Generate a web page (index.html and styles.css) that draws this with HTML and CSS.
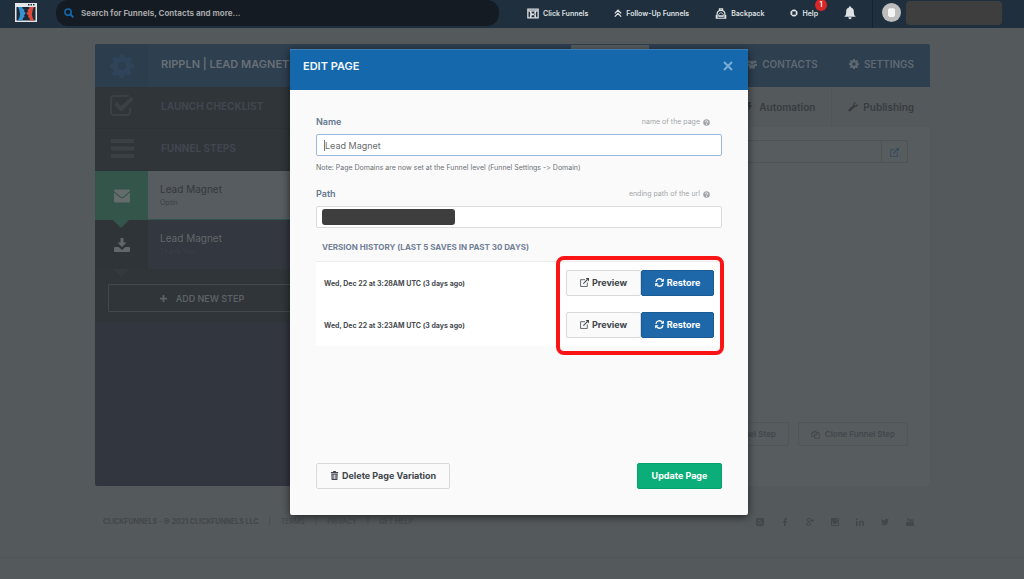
FILE: index.html
```
<!DOCTYPE html>
<html lang="en">
<head>
  <meta charset="UTF-8">
  <meta name="viewport" content="width=device-width, initial-scale=1.0">
  <title>Edit Page</title>
  <link rel="stylesheet" href="styles.css">
</head>
<body>
  <!-- shared icons -->
  <svg class="sprite" aria-hidden="true">
    <symbol id="gear" viewBox="0 0 16 16"><path fill-rule="evenodd" d="M6.600 0h2.800l.4 2.100 1.400.6L13 1.500l1.700 1.900-1.100 1.800.5 1.300 1.900.4v2.400l-2 .5-.5 1.400 1.100 1.800-1.800 1.800-1.800-1.100-1.400.6-.4 2H6.600l-.4-2-1.400-.6L3 14.800 1.300 13l1.100-1.800-.5-1.400-1.900-.5V6.900l1.900-.4.5-1.300-1.100-1.800L3 1.500l1.800 1.200 1.400-.6zM8 5.300a2.700 2.700 0 1 0 0 5.400 2.700 2.700 0 0 0 0-5.400z"/></symbol>
    <symbol id="external" viewBox="0 0 16 16"><path fill="none" stroke="currentColor" stroke-width="1.400" d="M9 3H1v12h12V8"/><path fill="none" stroke="currentColor" stroke-width="1.800" d="M6 10l7-7"/><path d="M10 0h6v6z"/></symbol>
    <symbol id="refresh" viewBox="0 0 16 16"><path fill="none" stroke="currentColor" stroke-width="2.400" d="M1.700 7A6.300 6.300 0 0 1 13 4M14.300 9A6.300 6.300 0 0 1 3 12"/><path d="M15.800.8v6H9.800zM.2 15.200v-6h6z"/></symbol>
    <symbol id="question" viewBox="0 0 16 16"><circle cx="8" cy="8" r="7.500"/><path fill="none" stroke="#fafafa" stroke-width="2" d="M5.300 6.300C5.400 3 10.700 3.200 10.600 6c0 1.700-2.500 1.800-2.500 3.800M8.100 11v2"/></symbol>
  </svg>

  <header class="topbar">
    <a class="logo" href="#" aria-label="Home">
      <svg viewBox="0 0 22 19"><path fill="#e4e6e8" d="M0 0h22v19H0z"/><path fill="#1b2a38" d="M1.500 4h19v13.500h-19zM13 1h1.500v1.500H13zM15.500 1H17v1.500h-1.500zM18 1h1.500v1.500H18z"/><path fill="#3a91cf" d="M3 4h4l1 2 1.500.5L9 8.500l1.500 1-.5 2-1 .5.500 2L8 15l-.5 2.500H3Q7 11 3 4z"/><path fill="#e0493a" d="M19 4h-4.500l-.5 2-1.500.5.500 2-1.500 1.500.5 1.500 1.500.5-.5 2 1.500 1 .5 2.500H19Q15 11 19 4z"/></svg>
    </a>
    <div class="search">
      <svg viewBox="0 0 16 16"><circle cx="6.500" cy="6.500" r="5" fill="none" stroke="currentColor" stroke-width="2.500"/><path stroke="currentColor" stroke-width="3" d="M10 10l5 5"/></svg>
      <input type="text" aria-label="Search" placeholder="Search for Funnels, Contacts and more...">
    </div>
    <nav class="topnav">
      <a class="nav-click" href="#"><svg viewBox="0 0 14 12"><path fill="none" stroke="currentColor" stroke-width="1.500" d="M1 1h12v10H1zM1 3h12"/><path d="M3 3h2q2 4 0 8H3q2-4 0-8zM11 3H9q-2 4 0 8h2q-2-4 0-8zM5 6h4v2H5z"/></svg>Click Funnels</a>
      <a class="nav-follow" href="#"><svg viewBox="0 0 10 10"><path fill="none" stroke="currentColor" stroke-width="1.600" d="M1 5.500l4-4 4 4M1 9.500l4-4 4 4"/></svg>Follow-Up Funnels</a>
      <a class="nav-pack" href="#"><svg viewBox="0 0 14 14"><path fill="none" stroke="currentColor" stroke-width="1.500" d="M5 3V1h4v2M2 13V8q0-5 5-5t5 5v5zM1 9v4h12V9M4 10h6"/><path fill="none" stroke="currentColor" d="M4 8q3-4 6 0v3H4z"/></svg>Backpack</a>
      <a class="nav-help" href="#"><svg viewBox="0 0 10 10"><circle cx="5" cy="5" r="3.400" fill="none" stroke="currentColor" stroke-width="2.200"/><path stroke="#1f2f3d" stroke-width=".7" d="M1 1l2.500 2.500M9 1L6.500 3.500M1 9l2.500-2.500M9 9L6.500 6.500"/></svg>Help<span class="badge">1</span></a>
      <a class="nav-bell" href="#" aria-label="Notifications"><svg viewBox="0 0 14 16"><path d="M7 0q1.200 0 1.200 1.600C11 2.200 11.500 4.500 11.500 7c0 3 1 4.200 2.300 5.300H.2C1.500 11.200 2.500 10 2.500 7c0-2.500.5-4.800 3.300-5.400Q5.800 0 7 0zM5 13h4q-.3 2.200-2 2.200T5 13z"/></svg></a>
    </nav>
    <div class="account">
      <span class="avatar"><svg viewBox="0 0 8 10"><path d="M1 0h6v1h1v8H7v1H1V9H0V1h1z"/></svg></span>
      <span class="account-name"></span>
    </div>
  </header>

  <main class="panel">
    <div class="panel-head">
      <span class="cell"><svg class="big-gear"><use href="#gear"/></svg></span>
      <h1>RIPPLN | LEAD MAGNET</h1>
      <span class="active-tab"></span>
      <nav class="head-nav">
        <a href="#"><svg viewBox="0 0 16 14"><circle cx="3" cy="3.500" r="2.200"/><circle cx="13" cy="3.500" r="2.200"/><circle cx="8" cy="4.500" r="3"/><path d="M0 10V6.500h4.500L6 8q-3 0-3 2.500zM16 10V6.500h-4.500L10 8q3 0 3 2.500zM3.500 14v-3q0-3 3-3h3q3 0 3 3v3z"/></svg>CONTACTS</a>
        <a href="#"><svg><use href="#gear"/></svg>SETTINGS</a>
      </nav>
    </div>
    <div class="panel-body">
      <aside class="sidebar">
        <div class="side-title">
          <span class="cell"><svg viewBox="0 0 24 22"><path fill="none" stroke="currentColor" stroke-width="2" d="M19 1H4Q1 1 1 4v13q0 3 3 3h13q3 0 3-3v-4"/><path fill="none" stroke="currentColor" stroke-width="4" d="M5.500 8.500L11 14 22.500 3"/></svg></span>
          <span>LAUNCH CHECKLIST</span>
        </div>
        <div class="side-title">
          <span class="cell"><svg viewBox="0 0 24 22"><path d="M1 2h23v4H1zM1 9.500h23v4H1zM1 17h23v4H1z"/></svg></span>
          <span>FUNNEL STEPS</span>
        </div>
        <a class="step step-active" href="#">
          <span class="cell"><svg viewBox="0 0 16 13"><path d="M1 0h14q1 0 1 1.500L9.500 7Q8 8 6.500 7L0 1.500Q0 0 1 0zM0 3l6 5q2 1.500 4 0l6-5v9q0 1-1 1H1q-1 0-1-1z"/></svg></span>
          <span class="step-text"><b>Lead Magnet</b><small>Optin</small></span>
        </a>
        <a class="step" href="#">
          <span class="cell"><svg viewBox="0 0 16 14"><path d="M6.500 0h3v4.500h3L8 9 3.500 4.500h3zM1 9h3.500L8 12l3.500-3H15q1 0 1 1v3q0 1-1 1H1q-1 0-1-1v-3q0-1 1-1z"/></svg></span>
          <span class="step-text"><b>Lead Magnet</b><small>Thank You</small></span>
        </a>
        <div class="add-wrap">
          <button class="add-step" type="button"><svg viewBox="0 0 8 8"><path d="M3 0h2v3h3v2H5v3H3V5H0V3h3z"/></svg>ADD NEW STEP</button>
        </div>
      </aside>
      <section class="content">
        <nav class="tabs">
          <a href="#"><svg viewBox="0 0 8 12"><path d="M3 0h4L5 4l3-.5L2.500 12 4 6 1 6.500z"/></svg>Automation</a>
          <a href="#"><svg viewBox="0 0 14 14"><path d="M1 10.500L7 5Q6.500 1 10 .3l1.300.2L9 3v2h2l2.500-2.500Q14.500 7 9 7.500L3.500 13q-1 1-2 0l-.5-.5q-1-1 0-2z"/></svg>Publishing</a>
        </nav>
        <div class="url-row">
          <input type="text" aria-label="Page address">
          <button type="button" aria-label="Open page"><svg><use href="#external"/></svg></button>
        </div>
        <div class="content-actions">
          <button type="button">Delete Funnel Step</button>
          <button type="button"><svg viewBox="0 0 14 14"><path fill="none" stroke="currentColor" stroke-width="1.300" d="M5 10H1V5l3-3h4v3M4 2v3H1M9 4.500h4V13H5.500V8zM9 4.500V8H5.500"/></svg>Clone Funnel Step</button>
        </div>
      </section>
    </div>
  </main>

  <footer class="footer">
    <div class="footer-links">
      <strong>CLICKFUNNELS - © 2021 CLICKFUNNELS LLC</strong>
      <span>|</span><a href="#">TERMS</a><span>|</span><a href="#">PRIVACY</a><span>|</span><a href="#">GET HELP</a>
    </div>
    <div class="social">
      <a href="#" aria-label="Blog"><svg viewBox="0 0 8 8"><path fill-rule="evenodd" d="M1 0h6l1 1v6L7 8H1L0 7V1zM1.500 1.500v1q3.500.5 4 4h1q-.5-4.500-5-5zM1.500 4v1l1.500 1.500h1Q3.500 4.500 1.500 4z"/></svg></a>
      <a href="#" aria-label="Facebook"><svg viewBox="0 0 8 8"><path d="M3 8V4.500H2V3h1V2q0-2 2-2h1v1.400H5q-.5 0-.5.600v1H6L5.800 4.500H4.500V8z"/></svg></a>
      <a href="#" aria-label="Google Plus"><svg viewBox="0 0 8 8"><path fill="none" stroke="currentColor" stroke-width=".9" d="M4.500.5H3Q1 .5 1 2t2 1.500 1.500-2L4 1M3 3.500l1.500 1.700Q5 7.500 2.500 7.500T.5 6t2.500-1.500M6.500 1v3M5 2.500h3"/></svg></a>
      <a href="#" aria-label="Instagram"><svg viewBox="0 0 8 8"><path fill-rule="evenodd" d="M1 0h6q1 0 1 1v6q0 1-1 1H1Q0 8 0 7V1q0-1 1-1zM1 3.500V7h6V3.500H6.300Q6.500 6 4 6T1.700 3.500zM5.500 1v1.300H7V1z"/><circle cx="4" cy="4" r="1"/></svg></a>
      <a href="#" aria-label="LinkedIn"><svg viewBox="0 0 8 8"><path d="M0 3h1.600v5H0zM0 .5h1.600V2H0zM3 3h1.500v.8Q5 2.800 6.200 2.800 8 2.800 8 5v3H6.400V5.300Q6.400 4 5.500 4t-1 1.300V8H3z"/></svg></a>
      <a href="#" aria-label="Twitter"><svg viewBox="0 0 8 8"><path d="M8 1.500l-.8 1Q7 7 3 7.300 1.200 7.300 0 6.500q1.400 0 2.200-.7Q1 5.600.8 4.700h.7Q.3 4.200.3 3l.6.200Q-.1 2.200.6 1q1.300 1.600 3.300 1.700Q3.700.8 5.400.7q.7 0 1.200.5l1-.4-.6.900z"/></svg></a>
      <a href="#" aria-label="YouTube"><svg viewBox="0 0 8 8"><path d="M1 4h6q1 0 1 1v2q0 1-1 1H1Q0 8 0 7V5q0-1 1-1z"/><path fill="none" stroke="currentColor" stroke-width=".8" d="M1 0l.8 1.700L2.500 0M1.800 1.500v2M3.500 1.500h1v1.700h-1zM5.700 1v2.200H7V1"/></svg></a>
    </div>
  </footer>

  <div class="overlay">
    <div class="modal" role="dialog" aria-labelledby="modal-title">
      <div class="modal-head">
        <h2 id="modal-title">EDIT PAGE</h2>
        <button class="close" type="button" aria-label="Close"><svg viewBox="0 0 10 10"><path stroke="currentColor" stroke-width="2" d="M1 1l8 8M9 1L1 9"/></svg></button>
      </div>
      <form class="modal-body">
        <div class="field-head">
          <label for="page-name">Name</label>
          <span>name of the page <svg><use href="#question"/></svg></span>
        </div>
        <div class="field field-focus">
          <span class="caret"></span>
          <input id="page-name" type="text" value="Lead Magnet">
        </div>
        <p class="note">Note: Page Domains are now set at the Funnel level (Funnel Settings -&gt; Domain)</p>
        <div class="field-head">
          <label for="page-path">Path</label>
          <span>ending path of the url <svg><use href="#question"/></svg></span>
        </div>
        <div class="field">
          <span class="redacted"></span>
          <input id="page-path" type="text">
        </div>
        <h3>VERSION HISTORY (LAST 5 SAVES IN PAST 30 DAYS)</h3>
        <div class="versions">
          <div class="version">
            <span>Wed, Dec 22 at 3:28AM UTC (3 days ago)</span>
            <div class="version-actions">
              <button class="btn preview" type="button"><svg><use href="#external"/></svg>Preview</button>
              <button class="btn restore" type="button"><svg><use href="#refresh"/></svg>Restore</button>
            </div>
          </div>
          <div class="version">
            <span>Wed, Dec 22 at 3:23AM UTC (3 days ago)</span>
            <div class="version-actions">
              <button class="btn preview" type="button"><svg><use href="#external"/></svg>Preview</button>
              <button class="btn restore" type="button"><svg><use href="#refresh"/></svg>Restore</button>
            </div>
          </div>
          <div class="highlight"></div>
        </div>
        <div class="modal-actions">
          <button class="btn delete" type="button"><svg viewBox="0 0 8 10"><path fill-rule="evenodd" d="M2.500 0h3v1H8v1.500H0V1h2.500zM.5 3h7l-.3 7H.8zM2 4v5h.8V4zm1.600 0v5h.8V4zm1.600 0v5H6V4z"/></svg>Delete Page Variation</button>
          <button class="btn update" type="button">Update Page</button>
        </div>
      </form>
    </div>
  </div>
</body>
</html>
```
FILE: styles.css
```
* {
  box-sizing: border-box;
}
body {
  margin: 0;
  min-height: 100vh;
  background: #54595b;
  color: #3d4248;
  font-family: Inter, "Open Sans", sans-serif;
  font-size: 9px;
  font-variant-ligatures: none;
}
a {
  color: inherit;
  text-decoration: none;
}
svg {
  fill: currentColor;
  flex: none;
}
button, input {
  font-family: inherit;
  margin: 0;
}
.sprite {
  display: none;
}

/* top bar */
.topbar {
  display: flex;
  align-items: center;
  height: 28px;
  background: #1f2f3d;
  color: #dfe2e4;
}
.logo {
  margin: 0 19px 3px 15px;
}
.logo svg {
  display: block;
  width: 22px;
  height: 19px;
}
.search {
  flex: 1;
  display: flex;
  align-items: center;
  gap: 7px;
  height: 26px;
  margin-bottom: 2px;
  padding: 0 8px;
  border-radius: 12px;
  background: #151b22;
}
.search svg {
  width: 10px;
  height: 10px;
  color: #1468ad;
}
.search input {
  flex: 1;
  border: 0;
  padding: 0;
  background: none;
  font-size: 8px;
  font-weight: 700;
}
.search input::placeholder {
  color: #a5a7a9;
}
.topnav {
  display: flex;
  align-items: center;
  margin-left: 28px;
  height: 26px;
  padding-bottom: 2px;
  font-size: 7px;
  font-weight: 600;
}
.topnav a {
  position: relative;
  display: flex;
  align-items: center;
  gap: 4px;
  margin-right: 26px;
}
.nav-click svg, .nav-pack svg {
  width: 12px;
  height: 11px;
}
.nav-follow svg, .nav-help svg {
  width: 8px;
  height: 8px;
}
.nav-bell svg {
  width: 12px;
  height: 14px;
}
.topnav .nav-bell {
  margin-right: 16px;
}
.badge {
  position: absolute;
  top: -10px;
  right: -9px;
  width: 12px;
  height: 12px;
  border-radius: 50%;
  background: #d92727;
  color: #fff;
  line-height: 12px;
  text-align: center;
}
.account {
  display: flex;
  align-items: center;
  gap: 5px;
  height: 28px;
  padding: 0 22px 3px 9px;
  border-left: 1px solid #17222c;
}
.avatar {
  display: grid;
  place-items: center;
  width: 19px;
  height: 19px;
  border-radius: 50%;
  background: #bdbdbd;
  color: #f4f4f4;
}
.avatar svg {
  width: 7px;
  height: 9px;
}
.account-name {
  width: 96px;
  height: 24px;
  border-radius: 4px;
  background: #3e3e3e;
}

/* funnel panel behind the dialog */
.panel {
  margin: 16px 94px 0 95px;
  border-radius: 2px;
  overflow: hidden;
  background: #575c5f;
}
.panel-head {
  display: flex;
  align-items: center;
  height: 43px;
  background: #2e3f50;
  color: #5f6972;
}
.cell {
  display: grid;
  place-items: center;
  flex: none;
  width: 53px;
  height: 100%;
}
.big-gear {
  width: 24px;
  height: 24px;
  color: #2f4459;
}
.panel-head .cell {
  background: #2c3d4e;
}
.panel-head h1 {
  margin: 0 0 4px 13px;
  font-size: 11px;
  font-weight: 600;
  color: #696f75;
}
.active-tab {
  align-self: flex-start;
  width: 78px;
  height: 5px;
  margin: 1px 0 0 auto;
  background: #575c5f;
}
.head-nav {
  display: flex;
  gap: 31px;
  margin-left: 98px;
  padding: 0 16px 3px 0;
  font-size: 10px;
  font-weight: 600;
}
.head-nav a, .tabs a {
  display: flex;
  align-items: center;
  gap: 5px;
}
.head-nav svg {
  width: 10px;
  height: 10px;
}
.panel-body {
  display: flex;
  height: 399px;
}
.sidebar {
  width: 214px;
  background: #32363f;
}
.side-title {
  display: flex;
  align-items: center;
  gap: 13px;
  height: 42px;
  padding-bottom: 4px;
  background: #2f3538;
  border-bottom: 1px solid #2d3236;
  color: #414650;
  font-size: 10px;
  font-weight: 700;
}
.side-title svg {
  width: 24px;
  height: 22px;
  color: #3b4044;
}
.step {
  display: flex;
  height: 49px;
  background: #33373f;
  color: #62676b;
}
.step .cell {
  position: relative;
  background: #2e3437;
}
.step svg {
  width: 16px;
  height: 14px;
}
.step .cell::after {
  content: "";
  position: absolute;
  top: 100%;
  left: 18px;
  border: 8px solid transparent;
  border-top-color: #34393d;
  border-bottom: 0;
}
.step-text {
  flex: 1;
  display: flex;
  flex-direction: column;
  gap: 3px;
  padding: 12px 12px 0;
  font-size: 10px;
}
.step-text b {
  font-weight: 400;
}
.step-text small {
  font-size: 7px;
  color: #3b4047;
}
.step-active {
  background: #575c60;
  color: #34393d;
}
.step-active .cell {
  z-index: 1;
  background: #34554a;
  color: #656c6c;
}
.step-active .cell::after {
  border-top-color: #34554a;
}
.step-active .step-text {
  border-bottom: 1px solid #34554a;
}
.add-wrap {
  padding: 15px 13px 11px;
  background: #2f3538;
}
.add-step {
  display: flex;
  align-items: center;
  justify-content: center;
  gap: 9px;
  width: 100%;
  height: 28px;
  padding: 0 6px;
  border: 1px solid #43484b;
  border-radius: 1px;
  background: none;
  color: #5c6164;
  font-size: 9px;
  font-weight: 600;
}
.add-step svg {
  width: 7px;
  height: 7px;
}
.content {
  flex: 1;
  display: flex;
  flex-direction: column;
}
.tabs {
  display: flex;
  justify-content: flex-end;
  height: 40px;
  background: #54595b;
  color: #373c40;
  font-size: 10px;
  font-weight: 600;
}
.tabs a {
  padding: 0 16px;
}
.tabs a:last-child {
  border-left: 1px solid #505557;
}
.tabs svg {
  width: 10px;
  height: 10px;
}
.url-row {
  display: flex;
  margin: 13px 22px 0;
  border: 1px solid #4e5356;
  border-radius: 2px;
  height: 23px;
}
.url-row input {
  flex: 1;
  border: 0;
  background: none;
}
.url-row button {
  width: 26px;
  padding: 0;
  border: 0;
  border-left: 1px solid #4e5356;
  background: none;
  color: #33495f;
}
.url-row svg {
  width: 9px;
  height: 9px;
}
.content-actions {
  display: flex;
  justify-content: flex-end;
  gap: 9px;
  margin: auto 22px 40px;
}
.content-actions button {
  display: flex;
  align-items: center;
  gap: 5px;
  height: 24px;
  padding: 0 12px;
  border: 1px solid #505558;
  border-radius: 2px;
  background: none;
  color: #42474b;
  font-size: 8px;
  font-weight: 600;
}
.content-actions svg {
  width: 9px;
  height: 9px;
}

.footer {
  display: flex;
  justify-content: space-between;
  align-items: center;
  padding: 31px 110px;
  padding-left: 103px;
  border-bottom: 1px dotted #4c5153;
  color: #42474a;
  font-size: 7px;
}
.footer-links {
  display: flex;
  gap: 10px;
}
.footer-links strong {
  font-weight: 700;
}
.social {
  display: flex;
  gap: 17px;
}
.social svg {
  display: block;
  width: 8px;
  height: 8px;
}

/* dialog */
.overlay {
  position: absolute;
  top: 49px;
  left: 0;
  right: 0;
  display: flex;
  justify-content: center;
  padding-left: 14px;
}
.modal {
  width: 458px;
  border-radius: 2px;
  overflow: hidden;
  background: #fafafa;
  box-shadow: 0 2px 8px rgba(0, 0, 0, .6);
}
.modal-head {
  display: flex;
  justify-content: space-between;
  height: 41px;
  padding: 9px 15px 0 13px;
  background: #1668ad;
  border-top: 1px solid #3a7db7;
}
.modal-head h2 {
  margin: 0;
  color: #f3f7fa;
  font-size: 11px;
  font-weight: 600;
  line-height: 14px;
}
.close {
  display: block;
  width: 10px;
  height: 14px;
  padding: 0;
  border: 0;
  background: none;
  color: #79acd7;
}
.close svg {
  display: block;
  width: 10px;
  height: 14px;
}
.modal-body {
  padding: 26px;
}
.field-head {
  display: flex;
  justify-content: space-between;
  height: 18px;
  padding-right: 12px;
  color: #a3a6a9;
  font-size: 7px;
  line-height: 12px;
}
.field-head label {
  color: #64788f;
  font-size: 9px;
  font-weight: 600;
}
.field-head span {
  display: flex;
  align-items: center;
  gap: 3px;
  height: 12px;
}
.field-head svg {
  width: 7px;
  height: 7px;
}
.field {
  display: flex;
  align-items: center;
  height: 22px;
  padding: 0 7px 0 5px;
  border: 1px solid #d9dbdd;
  border-radius: 2px;
  background: #fff;
}
.field input {
  flex: 1;
  border: 0;
  padding: 0;
  background: none;
  color: #686c70;
  font-size: 9px;
  outline: 0;
}
.field-focus {
  padding-left: 7px;
  border-color: #9cb8df;
}
.caret {
  width: 1px;
  height: 11px;
  background: #777;
}
.redacted {
  width: 133px;
  height: 16px;
  border-radius: 3px;
  background: #3e3e3e;
}
.note {
  margin: 6px 0 14px;
  color: #6d7175;
  font-size: 7px;
  line-height: 12px;
}
.modal h3 {
  margin: 13px 6px 8px;
  color: #718096;
  font-size: 8px;
  font-weight: 700;
  line-height: 12px;
}
.versions {
  position: relative;
  padding-right: 8px;
  border-top: 1px solid #ececec;
  background: #fff;
}
.version {
  display: flex;
  align-items: center;
  justify-content: space-between;
  height: 42px;
  padding-left: 8px;
  color: #484c50;
  font-size: 7px;
  font-weight: 700;
}
.version-actions {
  display: flex;
}
.btn {
  display: flex;
  align-items: center;
  justify-content: center;
  gap: 3px;
  height: 26px;
  padding: 0 13px 1px;
  border: 1px solid #d7d9da;
  border-radius: 2px;
  background: #fafafa;
  color: #3f454c;
  font-size: 9px;
  font-weight: 700;
}
.btn svg {
  width: 9px;
  height: 9px;
}
.preview {
  width: 75px;
}
.restore {
  width: 73px;
  border-color: #195b94;
  background: #1e68a9;
  color: #fff;
}
.highlight {
  position: absolute;
  top: -6px;
  right: -2px;
  width: 168px;
  height: 99px;
  border: 4px solid #fb1414;
  border-radius: 8px;
}
.modal-actions {
  display: flex;
  justify-content: space-between;
  margin-top: 117px;
}
.update {
  width: 85px;
  border-color: #07a070;
  background: #0bae79;
  color: #fff;
}
```
